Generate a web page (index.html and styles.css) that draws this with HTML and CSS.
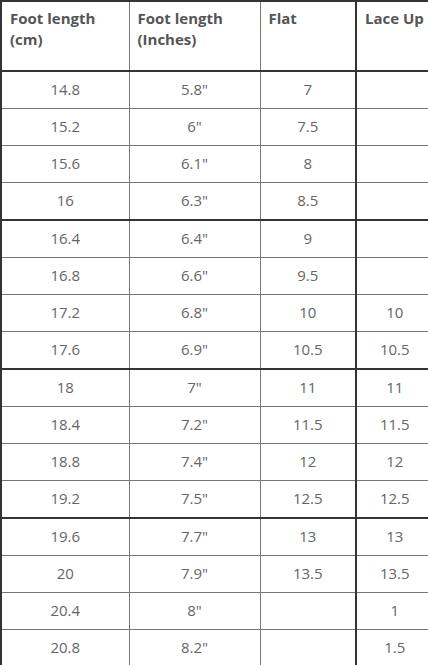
FILE: index.html
```html
<!DOCTYPE html>
<html lang="en">
<head>
<meta charset="utf-8">
<title>Size chart</title>
<link rel="stylesheet" href="styles.css">
</head>
<body>
<table class="chart">
  <colgroup>
    <col class="c1"><col class="c2"><col class="c3"><col class="c4">
  </colgroup>
  <thead>
    <tr class="head">
      <th>Foot length<br>(cm)</th>
      <th>Foot length<br>(Inches)</th>
      <th>Flat</th>
      <th class="lace">Lace Up</th>
    </tr>
  </thead>
  <tbody>
    <tr><td>14.8</td><td>5.8"</td><td>7</td><td class="lace"></td></tr>
    <tr><td>15.2</td><td>6"</td><td>7.5</td><td class="lace"></td></tr>
    <tr><td>15.6</td><td>6.1"</td><td>8</td><td class="lace"></td></tr>
    <tr><td>16</td><td>6.3"</td><td>8.5</td><td class="lace"></td></tr>
    <tr class="grp"><td>16.4</td><td>6.4"</td><td>9</td><td class="lace"></td></tr>
    <tr><td>16.8</td><td>6.6"</td><td>9.5</td><td class="lace"></td></tr>
    <tr><td>17.2</td><td>6.8"</td><td>10</td><td class="lace">10</td></tr>
    <tr><td>17.6</td><td>6.9"</td><td>10.5</td><td class="lace">10.5</td></tr>
    <tr class="grp"><td>18</td><td>7"</td><td>11</td><td class="lace">11</td></tr>
    <tr><td>18.4</td><td>7.2"</td><td>11.5</td><td class="lace">11.5</td></tr>
    <tr><td>18.8</td><td>7.4"</td><td>12</td><td class="lace">12</td></tr>
    <tr><td>19.2</td><td>7.5"</td><td>12.5</td><td class="lace">12.5</td></tr>
    <tr class="grp"><td>19.6</td><td>7.7"</td><td>13</td><td class="lace">13</td></tr>
    <tr><td>20</td><td>7.9"</td><td>13.5</td><td class="lace">13.5</td></tr>
    <tr><td>20.4</td><td>8"</td><td></td><td class="lace">1</td></tr>
    <tr><td>20.8</td><td>8.2"</td><td></td><td class="lace">1.5</td></tr>
  </tbody>
</table>
</body>
</html>
```
FILE: styles.css
```css
html, body {
  margin: 0;
  padding: 0;
  background: #fff;
  overflow: hidden;
}
body {
  width: 428px;
  height: 665px;
  font-family: "Open Sans", "Liberation Sans", sans-serif;
}
.chart {
  border-collapse: collapse;
  table-layout: fixed;
  width: 432px;
  margin-left: 0;
  border-left: 2px solid #333;
  border-top: 2px solid #333;
}
.c1 { width: 128px; }
.c2 { width: 131px; }
.c3 { width: 96px; }
.c4 { width: 77px; }
.chart th,
.chart td {
  border: 1px solid #777;
  padding: 0;
}
.chart th {
  height: 61px;
  vertical-align: top;
  text-align: left;
  padding: 6px 6px 1px 8px;
  font-size: 15px;
  line-height: 21px;
  font-weight: 700;
  color: #555;
  border-bottom: 2px solid #333;
}
.chart td {
  height: 34px;
  padding-bottom: 2px;
  text-align: center;
  vertical-align: middle;
  font-size: 15px;
  color: #666;
}
.chart .lace {
  border-left: 2px solid #333;
}
.chart tr.grp td {
  border-top: 2px solid #333;
}
```
